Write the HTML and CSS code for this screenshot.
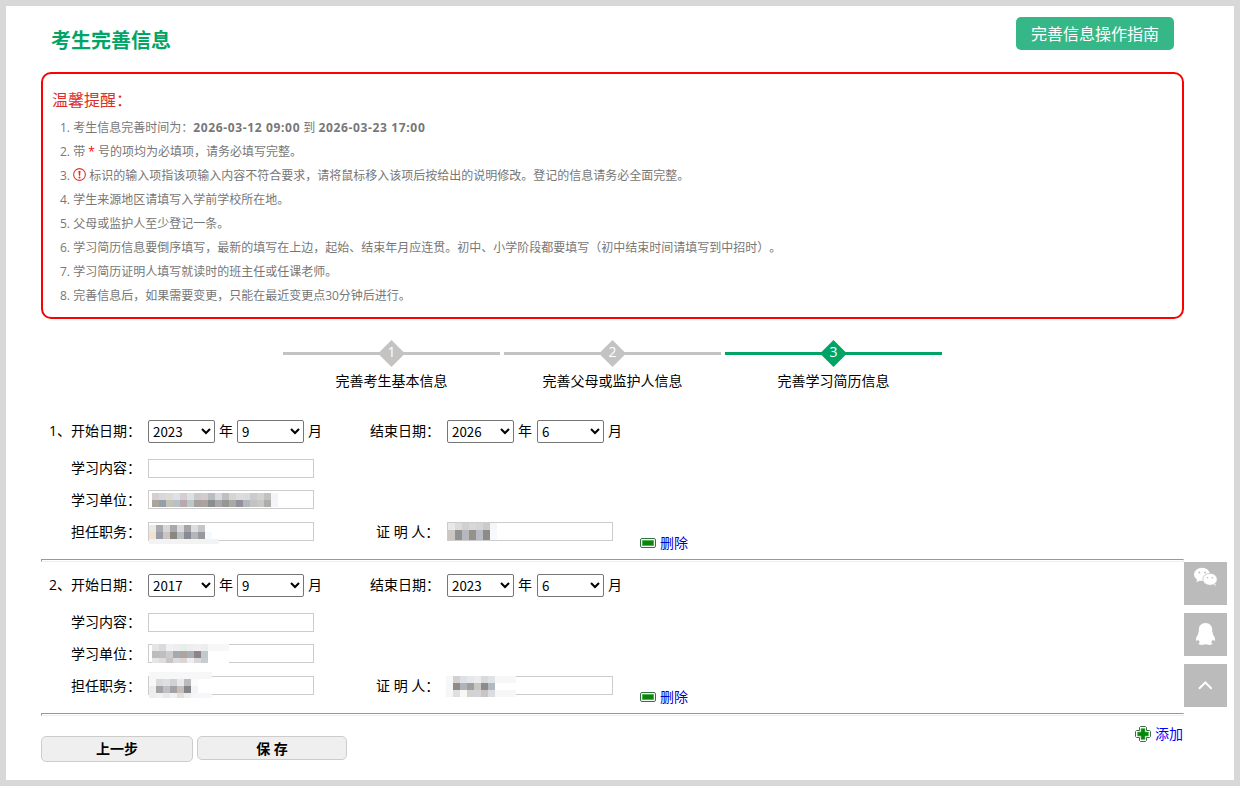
FILE: index.html
```html
<!DOCTYPE html>
<html lang="zh-CN">
<head>
<meta charset="utf-8">
<title>考生完善信息</title>
<link rel="stylesheet" href="styles.css">
</head>
<body>
<main class="page">
  <header class="head">
    <h1 class="title">考生完善信息</h1>
    <a class="guide">完善信息操作指南</a>
  </header>

  <section class="tips">
    <h2 class="tips-title">温馨提醒：</h2>
    <p>1. 考生信息完善时间为：<b>2026-03-12 09:00</b> 到 <b>2026-03-23 17:00</b></p>
    <p>2. 带 <i class="star">*</i> 号的项均为必填项，请务必填写完整。</p>
    <p>3. <svg class="warn" width="13" height="14" viewBox="0 0 13 14"><circle cx="6.5" cy="6.500" r="5.900" fill="none" stroke="#dd3a30" stroke-width="1.1"/><path d="M5.500 3h2l-.4 4.700H5.900z" fill="#dd2a20"/><circle cx="6.500" cy="9.400" r="1" fill="#dd2a20"/></svg> 标识的输入项指该项输入内容不符合要求，请将鼠标移入该项后按给出的说明修改。登记的信息请务必全面完整。</p>
    <p>4. 学生来源地区请填写入学前学校所在地。</p>
    <p>5. 父母或监护人至少登记一条。</p>
    <p>6. 学习简历信息要倒序填写，最新的填写在上边，起始、结束年月应连贯。初中、小学阶段都要填写（初中结束时间请填写到中招时）。</p>
    <p>7. 学习简历证明人填写就读时的班主任或任课老师。</p>
    <p>8. 完善信息后，如果需要变更，只能在最近变更点30分钟后进行。</p>
  </section>

  <nav class="steps">
    <div class="step"><div class="rail"><svg class="diamond" width="27" height="27" viewBox="0 0 27 27"><path d="M13.500 0 27 13.500 13.500 27 0 13.500z"/></svg><span class="num">1</span></div><span class="step-name">完善考生基本信息</span></div>
    <div class="step"><div class="rail"><svg class="diamond" width="27" height="27" viewBox="0 0 27 27"><path d="M13.500 0 27 13.500 13.500 27 0 13.500z"/></svg><span class="num">2</span></div><span class="step-name">完善父母或监护人信息</span></div>
    <div class="step on"><div class="rail"><svg class="diamond" width="27" height="27" viewBox="0 0 27 27"><path d="M13.500 0 27 13.500 13.500 27 0 13.500z"/></svg><span class="num">3</span></div><span class="step-name">完善学习简历信息</span></div>
  </nav>

  <section class="entry">
    <div class="row dates"><span class="idx">1、</span><span class="label">开始日期：</span><select><option>2023</option></select><span class="unit">年</span><select><option>9</option></select><span class="unit month">月</span><span class="label end">结束日期：</span><select><option>2026</option></select><span class="unit late">年</span><select><option>6</option></select><span class="unit month">月</span></div>
    <div class="row content"><span class="idx"></span><span class="label">学习内容：</span><span class="field"></span></div>
    <div class="row school"><span class="idx"></span><span class="label">学习单位：</span><span class="field"><svg class="mosaic m1" data-rows="d5d0cd d5d9dd dedbd5 dde2e8 d5cdd0 d9e2e2 cdc8ca d2cdca b9bcc2 d7dade bebfbe d6d6d0 dddbdd d8dade cacbcc d2d2d2 c1c1c0 f4f4f8|a9a49e 969fa7 c4c1b8 b9bfc8 b6a9ab bdc7c8 a5a09e aaa39f 8a8f8e aaa6ab 969790 a9a8a8 919299 b1b7bc c1c2c1 c8c8c5 adadad f4f5f9"></svg></span></div>
    <div class="row duty"><span class="idx"></span><span class="label">担任职务：</span><span class="field"><svg class="mosaic m2" data-rows="eee8e2 a9a9b0 d8d8da a9a9aa d9dadb a5a4a9 dedee0 c3c5ca ffffff ffffff|efe2d5 969da7 cdc3c3 888880 b8bdbf 898b92 b2b5ba 9a989c f5faff ffffff|f3f3f3 f3f3f3 f3f3f3 f3f3f3 f3f3f3 f3f3f3 f3f3f3 f3f3f3 f3f3f3 f3f3f3"></svg></span><span class="label witness">证 明 人：</span><span class="field"><svg class="mosaic m3" data-rows="e9e9eb dcdcdc cfd0d1 d8d8d8 d3d4d7 cacaca f5f6f8|cbc6c2 919191 b5b8be 969189 b7bbc3 8e8a84 f5faff|cbc6c2 919191 b5b8be 969189 b7bbc3 8e8a84 f5faff"></svg></span><a class="del"><svg width="16" height="10" viewBox="0 0 16 10"><rect x=".5" y=".5" width="15" height="9" rx="1.5" fill="#fff" stroke="#317142"/><rect x="2" y="2" width="12" height="6" fill="#6abb65"/><rect x="2.8" y="2.8" width="10.4" height="4.4" fill="#07860b"/></svg>删除</a></div>
  </section>
  <hr class="line">

  <section class="entry">
    <div class="row dates"><span class="idx">2、</span><span class="label">开始日期：</span><select><option>2017</option></select><span class="unit">年</span><select><option>9</option></select><span class="unit month">月</span><span class="label end">结束日期：</span><select><option>2023</option></select><span class="unit late">年</span><select><option>6</option></select><span class="unit month">月</span></div>
    <div class="row content"><span class="idx"></span><span class="label">学习内容：</span><span class="field"></span></div>
    <div class="row school"><span class="idx"></span><span class="label">学习单位：</span><span class="field"><svg class="mosaic m4" data-rows="e5e4e5 d9dade f1f1f1 eeeeee e7edec eeeef1 f0f0f0 ededee f7f7f7 f7f7f7 f7f7f7|bdbbbd c0bdc1 cfcbca a6aab0 aea59f a8aeb2 8d8487 c1c9ce ffffff ffffff ffffff|e5e5e5 dedddd c9c5c3 dadde0 dcd4d4 eeeef0 d7d9da c8ccd1 ffffff ffffff ffffff"></svg></span></div>
    <div class="row duty"><span class="idx"></span><span class="label">担任职务：</span><span class="field"><svg class="mosaic m5" data-rows="f7f7f7 f7f7f7 f7f7f7 f7f7f7 f7f7f7 f7f7f7 f7f7f7 f7f7f7 f7f7f7|f8f8f8 dbdadb dce0e4 d0d3d6 e9e9ed b9bbbd fbfbfc ffffff ffffff|ededee a4a2a4 bdc1c6 a5a1a3 c5bfb9 858487 f2f4f8 ffffff ffffff|eeeeee f1f1f1 e9e9ec f0f0f0 e2dfd8 eeeeee f6f6f8 f7f7f7 f7f7f7"></svg></span><span class="label witness">证 明 人：</span><span class="field"><svg class="mosaic m6" data-rows="f7f7f7 d2d1d2 dfe1e5 e6e7e9 ecebed d7dbdc e0e2e6 f7f7f7 f7f7f7 f7f7f7|f6f6f6 918a88 aeb4bc a19e9c c8c8c2 8c8b94 b1b9c1 ffffff ffffff ffffff|f6f6f6 dfdfe1 f8f7f2 d2d1d3 d1d3d6 c9c5c4 dadcdf f7f7f7 f7f7f7 f7f7f7"></svg></span><a class="del"><svg width="16" height="10" viewBox="0 0 16 10"><rect x=".5" y=".5" width="15" height="9" rx="1.5" fill="#fff" stroke="#317142"/><rect x="2" y="2" width="12" height="6" fill="#6abb65"/><rect x="2.8" y="2.8" width="10.4" height="4.4" fill="#07860b"/></svg>删除</a></div>
  </section>
  <hr class="line">

  <footer class="foot">
    <button class="btn prev">上一步</button>
    <button class="btn save">保 存</button>
    <a class="add"><svg width="16" height="16" viewBox="0 0 16 16"><path d="M5.500.5h5l1 1v3h3l1 1v5l-1 1h-3v3l-1 1h-5l-1-1v-3h-3l-1-1v-5l1-1h3v-3z" fill="#fff" stroke="#317142"/><path d="M6 2.500h4V6h3.500v4H10v3.500H6V10H2.500V6H6z" fill="#07860b" stroke="#6abb65" stroke-width=".6"/></svg>添加</a>
  </footer>
</main>

<aside class="side">
  <a class="tool"><svg width="43" height="43" viewBox="0 0 43 43"><path d="M13 17l-.4 3.300 3.400-1.800z" fill="#fff"/><ellipse cx="18" cy="12.400" rx="8" ry="6.600" fill="#fff"/><path d="M28.500 21.800 31.600 24l-.6-3.500z" fill="#fff"/><ellipse cx="26" cy="17.300" rx="7.200" ry="6" fill="#fff" stroke="#bbb" stroke-width=".7"/><g fill="#bbb"><circle cx="15.400" cy="10.500" r=".9"/><circle cx="21" cy="10.500" r=".9"/><circle cx="23.500" cy="15.800" r=".8"/><circle cx="28.300" cy="15.800" r=".8"/></g></svg></a>
  <a class="tool"><svg width="43" height="43" viewBox="0 0 43 43"><path d="M21.500 10c-4.300 0-6.700 3-6.700 6.700v2.100c-.7 1-.9 1.900-.9 2.900-1.300 1.700-2.200 3.800-1.900 5.900.1.900 1.100.3 2.200-1 .4 1.100 1 2 1.900 2.800-1.200.4-1.700 1-1.500 1.700.4 1.200 5.400 1 6.900-.1 1.500 1.100 6.500 1.300 6.900.1.200-.7-.3-1.300-1.500-1.700.9-.8 1.500-1.700 1.900-2.800 1.100 1.300 2.100 1.900 2.200 1 .3-2.100-.6-4.200-1.900-5.900 0-1-.2-1.900-.9-2.900v-2.100c0-3.700-2.400-6.700-6.700-6.700z" fill="#fff"/></svg></a>
  <a class="tool"><svg width="43" height="43" viewBox="0 0 43 43"><path d="m15 24.700 6.300-6.200 6.300 6.200" fill="none" stroke="#fff" stroke-width="2"/></svg></a>
</aside>
<script src="mosaic.js"></script>
</body>
</html>
```
FILE: styles.css
```css
* { box-sizing: border-box; }
body {
  margin: 0;
  height: 786px;
  overflow: hidden;
  border: 6px solid #d8d8d8;
  background: #fff;
  color: #000;
  font: 14px/20px "Open Sans", "Noto Sans CJK SC", sans-serif;
  text-spacing-trim: space-all;
}
.page { padding: 0 50px 0 35px; }
.head {
  display: flex;
  justify-content: space-between;
  height: 66px;
  padding: 11px 10px 0;
}
.title {
  margin: 9px 0 0;
  font-size: 20px;
  line-height: 30px;
  color: #00a566;
}
.guide {
  height: 33px;
  width: 158px;
  border-radius: 5px;
  background: #36b787;
  color: #fff;
  font-size: 16px;
  line-height: 34px;
  text-align: center;
}
.tips {
  height: 247px;
  padding: 13px 9px 0;
  border: 2px solid #f00;
  border-radius: 10px;
  color: #777;
  font-size: 12px;
}
.tips-title {
  margin: 0 0 2px;
  font-size: 16px;
  font-weight: 400;
  line-height: 27px;
  color: #dd2e2e;
}
.tips p {
  height: 24px;
  margin: 0 0 0 8px;
  line-height: 24px;
  white-space: nowrap;
}
.tips b { letter-spacing: .65px; }
.star { color: #f00; font-style: normal; }
.warn { vertical-align: -2px; }
.steps {
  display: flex;
  justify-content: center;
  gap: 4px;
  height: 89px;
  padding-top: 21px;
}
.step { width: 217px; text-align: center; }
.rail {
  display: grid;
  place-items: center;
  height: 27px;
  background: linear-gradient(#c3c3c3, #c3c3c3) 0 12px / 100% 3px no-repeat;
}
.diamond { grid-area: 1 / 1; fill: #c3c3c3; }
.num { grid-area: 1 / 1; padding-bottom: 3px; color: #fff; line-height: 24px; }
.on .rail { background-image: linear-gradient(#00a566, #00a566); }
.on .diamond { fill: #00a566; }
.step-name { display: block; margin-top: 4px; }
.entry { height: 151px; padding: 12px 0 0 8px; }
.row { display: flex; align-items: center; height: 19px; white-space: pre; }
.dates { height: 23px; line-height: 18px; padding-bottom: 0; }
.dates span { margin-bottom: 2px; }
.content { margin-top: 16px; }
.content .label { margin-bottom: 2px; }
.school { margin-top: 12px; }
.duty { margin-top: 13px; }
.idx { width: 22px; }
.label { width: 77px; }
.dates .end { margin-left: 48px; }
.witness { width: 71px; margin-left: 62px; }
.row select {
  width: 67px;
  height: 23px;
  margin: 0;
  padding-bottom: 1px;
  border: 1px solid #767676;
  border-radius: 2px;
  background: #fff;
  color: #000;
  font: 13.333px "Noto Sans CJK SC", sans-serif;
}
.unit { width: 22px; padding-left: 4px; }
.late { width: 23px; }
.month { width: 18px; }
.field {
  position: relative;
  width: 166px;
  height: 19px;
  border: 1px solid #ccc;
  background: #fff;
}
.mosaic { position: absolute; }
.m1 { left: 3px; top: 2px; }
.m2 { left: 0; top: 2px; height: 19px; }
.m3 { left: 0; top: 0; height: 17px; }
.m4 { left: 3px; top: -1px; height: 19px; }
.m5 { left: 0; top: -5px; height: 26px; }
.m6 { left: -2px; top: -1px; }
.del, .add { display: flex; align-items: center; gap: 4px; color: #0000d0; }
.del { margin: 23px 0 0 27px; }
.line {
  height: 3px;
  margin: 0;
  border: 1px solid;
  border-color: #999 #eee #eee #999;
}
.foot { display: flex; align-items: flex-start; gap: 4px; padding-top: 20px; }
.btn {
  height: 26px;
  width: 152px;
  padding: 0;
  border: 1px solid #ccc;
  border-radius: 5px;
  background: #efefef;
  color: #000;
  font: bold 14px/24px "Open Sans", "Noto Sans CJK SC", sans-serif;
}
.save { width: 150px; height: 24px; }
.add { margin: -12px 1px 0 auto; color: #00f; }
.side {
  position: absolute;
  left: 1184px;
  top: 562px;
  display: grid;
  gap: 8px;
}
.tool { width: 43px; height: 43px; background: #bbb; }
.tool svg { display: block; }
```
FILE: mosaic.js
```js
// Paints the censored field values as rows of 7px blocks.
document.querySelectorAll('.mosaic').forEach(function (svg) {
  var rows = svg.dataset.rows.split('|').map(function (r) { return r.split(' '); });
  svg.setAttribute('width', rows[0].length * 7);
  svg.setAttribute('height', rows.length * 7);
  rows.forEach(function (row, y) {
    row.forEach(function (color, x) {
      var cell = document.createElementNS('http://www.w3.org/2000/svg', 'rect');
      cell.setAttribute('x', x * 7);
      cell.setAttribute('y', y * 7);
      cell.setAttribute('width', 7);
      cell.setAttribute('height', 7);
      cell.setAttribute('fill', '#' + color);
      svg.appendChild(cell);
    });
  });
});
```
